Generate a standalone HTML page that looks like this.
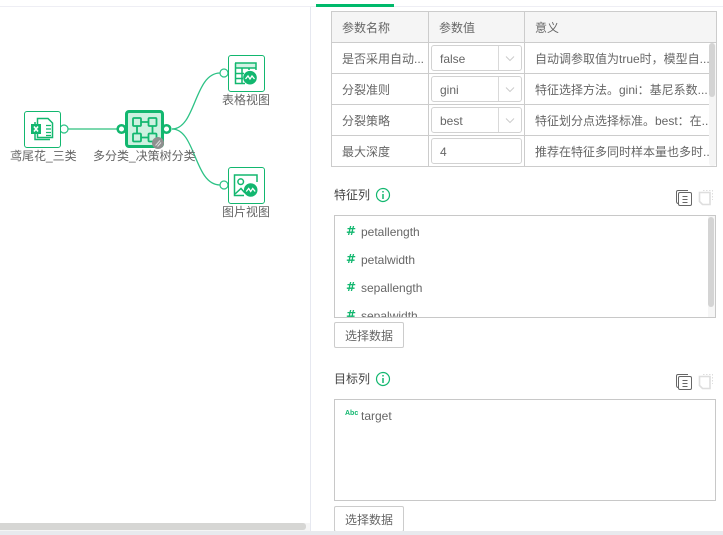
<!DOCTYPE html>
<html><head><meta charset="utf-8">
<style>
html,body{margin:0;padding:0;width:723px;height:535px;overflow:hidden;background:#fff;font-family:"Liberation Sans","Noto Sans CJK SC",sans-serif;font-size:12px;color:#666}
.a{position:absolute;box-sizing:border-box}
.t{position:absolute;white-space:nowrap;line-height:16px;height:16px}
.node{position:absolute;box-sizing:border-box;width:37px;height:37px;border:1px solid #12b76f;border-radius:3px;background:#fff}
.lbl{position:absolute;white-space:nowrap;font-size:12px;line-height:16px;color:#666;text-align:center}
.cell{position:absolute;background:#ccc}
.sel{position:absolute;box-sizing:border-box;left:431px;width:91px;height:26px;border:1px solid #d2d2d2;border-radius:3px;background:#fff}
.sel i{position:absolute;left:66px;top:0;width:1px;height:24px;background:#d9d9d9}
.sel svg{position:absolute;left:73px;top:9px}
.sel span{position:absolute;left:8px;top:5px;line-height:16px;color:#666}
.btn{position:absolute;box-sizing:border-box;left:334px;width:70px;height:26px;border:1px solid #ccc;border-radius:2px;background:#fff;text-align:center;line-height:26px;color:#666}
.box{position:absolute;box-sizing:border-box;left:334px;width:382px;border:1px solid #c8c8c8;background:#fff;overflow:hidden}
.hash{position:absolute;color:#12b76f;font-family:"DejaVu Sans",sans-serif;font-weight:bold;font-size:12px;line-height:16px;left:11px}
.it{position:absolute;left:26px;line-height:16px;color:#666;font-size:12px;white-space:nowrap}
.h{position:absolute;left:334px;font-size:12px;line-height:16px;color:#444}
</style></head><body>
<!-- top lines -->
<div class="a" style="left:0;top:6px;width:723px;height:1px;background:#eeeef4"></div>
<div class="a" style="left:316px;top:4px;width:78px;height:3px;background:#00b96b"></div>
<div class="a" style="left:310px;top:7px;width:1px;height:524px;background:#e6e8f0"></div>

<!-- connections -->
<svg class="a" style="left:0;top:0" width="310" height="240" fill="none">
<path d="M68 129H117" stroke="#7cd8ae" stroke-width="2"/>
<path d="M172 129C196 129 194 73 220 73" stroke="#2cc285" stroke-width="1.300"/>
<path d="M172 129C196 129 194 185 220 185" stroke="#2cc285" stroke-width="1.300"/>
<circle cx="64" cy="129" r="4" fill="#fff" stroke="#2cc285" stroke-width="1.200"/>
<circle cx="224" cy="73" r="4" fill="#fff" stroke="#2cc285" stroke-width="1.200"/>
<circle cx="224" cy="185" r="4" fill="#fff" stroke="#2cc285" stroke-width="1.200"/>
</svg>

<!-- excel node -->
<div class="node" style="left:24px;top:111px">
<svg width="35" height="35" style="position:absolute;left:0;top:0" fill="none" stroke="#12b76f" stroke-width="1.500">
<path d="M10 10V27.500H25"/>
<path d="M12.500 12V6.500H23L27.500 11V25.500H12.500V22"/>
<rect x="6" y="12" width="10" height="10" fill="#12b76f" stroke="none"/>
<path d="M9 14.500L13 19.500M13 14.500L9 19.500" stroke="#fff" stroke-width="1.600"/>
<path d="M21 13.500H26M21 17H26M21 20.500H26M21 23.500H26" stroke-width="1.200"/>
</svg></div>
<div class="lbl" style="left:10px;top:148px;width:66px;font-size:12px">鸢尾花_三类</div>

<!-- main node -->
<div class="a" style="left:124.500px;top:109.500px;width:39px;height:38px;border:3px solid #12b76f;border-radius:4px;background:#cdf1e0"></div>
<svg class="a" style="left:115px;top:105px" width="60" height="50" fill="none">
<circle cx="6.500" cy="24" r="3.800" fill="#fff" stroke="#12b76f" stroke-width="2.500"/>
<circle cx="51.500" cy="24" r="3.800" fill="#fff" stroke="#12b76f" stroke-width="2.500"/>
<g stroke="#12b76f" stroke-width="1.800">
<rect x="18" y="13" width="8" height="8" rx="1"/><rect x="33.500" y="13" width="8" height="8" rx="1"/>
<rect x="18" y="28.500" width="8" height="8" rx="1"/><rect x="33.500" y="28.500" width="8" height="8" rx="1"/>
<path d="M26 17H33.500M26 32.500H33.500M22 21V28.500M37.500 21V28.500"/>
</g>
<circle cx="43" cy="38" r="6" fill="#8f8f8f"/>
<path d="M40.500 40.500L45 35.500M42.500 41.500L46 37.500" stroke="#dcdcdc" stroke-width="1"/>
</svg>
<div class="lbl" style="left:93px;top:148px;width:102px">多分类_决策树分类</div>

<!-- table view node -->
<div class="node" style="left:228px;top:55px">
<svg width="35" height="35" style="position:absolute;left:0;top:0" fill="none" stroke="#12b76f" stroke-width="1.500">
<path d="M6 7H27V14M6.500 7V27.500H16M6 12H27M6.500 17.500H15M6.500 22.500H14M13 12V27.500M20 12V14"/>
<path d="M6 7H27V12H6Z" fill="#12b76f" fill-opacity=".18" stroke="none"/>
<circle cx="21" cy="21.700" r="6.800" fill="#12b76f" stroke="none"/>
<path d="M16.500 23L19 20L21 23L23 20L25.500 23" stroke="#fff" stroke-width="1.300"/>
</svg></div>
<div class="lbl" style="left:221px;top:92px;width:50px">表格视图</div>

<!-- image view node -->
<div class="node" style="left:228px;top:167px">
<svg width="35" height="35" style="position:absolute;left:0;top:0" fill="none" stroke="#12b76f" stroke-width="1.500">
<path d="M28 14V7H5.500V27.500H15"/>
<circle cx="11.700" cy="13.700" r="2.800"/>
<path d="M6 26L12 20.500L16 25"/>
<circle cx="21.700" cy="22" r="6.800" fill="#12b76f" stroke="none"/>
<path d="M17.200 23.500L19.700 20.500L21.700 23.500L23.700 20.500L26.200 23.500" stroke="#fff" stroke-width="1.300"/>
</svg></div>
<div class="lbl" style="left:221px;top:204px;width:50px">图片视图</div>

<!-- table -->
<div class="a" style="left:332px;top:12px;width:384px;height:30px;background:#f5f5f5"></div>
<div class="cell" style="left:331px;top:11px;width:386px;height:1px"></div>
<div class="cell" style="left:331px;top:42px;width:386px;height:1px"></div>
<div class="cell" style="left:331px;top:73px;width:386px;height:1px"></div>
<div class="cell" style="left:331px;top:104px;width:386px;height:1px"></div>
<div class="cell" style="left:331px;top:135px;width:386px;height:1px"></div>
<div class="cell" style="left:331px;top:166px;width:386px;height:1px"></div>
<div class="cell" style="left:331px;top:11px;width:1px;height:156px"></div>
<div class="cell" style="left:428px;top:11px;width:1px;height:156px"></div>
<div class="cell" style="left:524px;top:11px;width:1px;height:156px"></div>
<div class="cell" style="left:716px;top:11px;width:1px;height:156px"></div>
<div class="a" style="left:709px;top:43px;width:7px;height:123px;background:#f5f5f5;border-radius:3px"></div>
<div class="a" style="left:709px;top:43px;width:6px;height:54px;background:#d4d4d4;border-radius:3px"></div>

<div class="t" style="left:342px;top:20px">参数名称</div>
<div class="t" style="left:439px;top:20px">参数值</div>
<div class="t" style="left:535px;top:20px">意义</div>

<div class="t" style="left:342px;top:51px;width:82px;overflow:hidden">是否采用自动...</div>
<div class="t" style="left:342px;top:82px">分裂准则</div>
<div class="t" style="left:342px;top:113px">分裂策略</div>
<div class="t" style="left:342px;top:144px">最大深度</div>

<div class="sel" style="top:45px"><span>false</span><i></i><svg width="10" height="8" fill="none"><path d="M1 1.500L5 5.500L9 1.500" stroke="#ccc"/></svg></div>
<div class="sel" style="top:76px"><span>gini</span><i></i><svg width="10" height="8" fill="none"><path d="M1 1.500L5 5.500L9 1.500" stroke="#ccc"/></svg></div>
<div class="sel" style="top:107px"><span>best</span><i></i><svg width="10" height="8" fill="none"><path d="M1 1.500L5 5.500L9 1.500" stroke="#ccc"/></svg></div>
<div class="sel" style="top:138px"><span>4</span></div>

<div class="t" style="left:535px;top:51px">自动调参取值为true时，模型自...</div>
<div class="t" style="left:535px;top:82px">特征选择方法。gini：基尼系数...</div>
<div class="t" style="left:535px;top:113px">特征划分点选择标准。best：在..</div>
<div class="t" style="left:535px;top:144px">推荐在特征多同时样本量也多时..</div>

<!-- feature section -->
<div class="h" style="left:334px;top:187px">特征列</div>
<svg class="a" style="left:375px;top:187px" width="16" height="16" fill="none"><circle cx="8" cy="8" r="6.500" stroke="#12b76f" stroke-width="1.200"/><path d="M8 7V12M8 4V5.500" stroke="#12b76f" stroke-width="1.500"/></svg>
<svg class="a" style="left:675px;top:189px" width="18" height="18" fill="none" stroke="#666"><path d="M3.500 14.500Q1.500 14.500 1.500 12.500V3Q1.500 1.500 3 1.500H13"/><rect x="3.500" y="3.500" width="13" height="13" rx="1.500"/><path d="M7.500 7.500H12.500M7.500 10.500H12.500M7.500 13.500H12.500"/></svg>
<svg class="a" style="left:698px;top:189px" width="16" height="18" fill="none" stroke="#dedede"><path d="M5 1.500H14.500V11" stroke-dasharray="1.500 1.500"/><path d="M1.500 3.500H12V15.500H4.500L1.500 12.500Z" stroke-width="1.600"/></svg>

<div class="box" style="top:215px;height:103px">
<span class="hash" style="top:7px">#</span><span class="it" style="top:8px">petallength</span>
<span class="hash" style="top:35px">#</span><span class="it" style="top:36px">petalwidth</span>
<span class="hash" style="top:63px">#</span><span class="it" style="top:64px">sepallength</span>
<span class="hash" style="top:91px">#</span><span class="it" style="top:92px">sepalwidth</span>
<div class="a" style="left:373px;top:0;width:7px;height:101px;background:#f6f6f6"></div>
<div class="a" style="left:373px;top:1px;width:6px;height:90px;background:#d4d4d4;border-radius:3px"></div>
</div>
<div class="btn" style="top:322px">选择数据</div>

<!-- target section -->
<div class="h" style="left:334px;top:371px">目标列</div>
<svg class="a" style="left:375px;top:371px" width="16" height="16" fill="none"><circle cx="8" cy="8" r="6.500" stroke="#12b76f" stroke-width="1.200"/><path d="M8 7V12M8 4V5.500" stroke="#12b76f" stroke-width="1.500"/></svg>
<svg class="a" style="left:675px;top:373px" width="18" height="18" fill="none" stroke="#666"><path d="M3.500 14.500Q1.500 14.500 1.500 12.500V3Q1.500 1.500 3 1.500H13"/><rect x="3.500" y="3.500" width="13" height="13" rx="1.500"/><path d="M7.500 7.500H12.500M7.500 10.500H12.500M7.500 13.500H12.500"/></svg>
<svg class="a" style="left:698px;top:373px" width="16" height="18" fill="none" stroke="#dedede"><path d="M5 1.500H14.500V11" stroke-dasharray="1.500 1.500"/><path d="M1.500 3.500H12V15.500H4.500L1.500 12.500Z" stroke-width="1.600"/></svg>

<div class="box" style="top:399px;height:102px">
<span class="a" style="left:10px;top:9px;color:#12b76f;font-size:7px;font-weight:bold;line-height:10px">Abc</span>
<span class="it" style="top:8px">target</span>
</div>
<div class="btn" style="top:506px">选择数据</div>

<!-- bottom scroll -->
<div class="a" style="left:0;top:523px;width:310px;height:8px;background:#f5f5f5"></div>
<div class="a" style="left:0;top:523px;width:306px;height:7px;background:#d6d6d4;border-radius:0 3px 3px 0"></div>
<div class="a" style="left:0;top:531px;width:723px;height:4px;background:#e8eaee"></div>
</body></html>
